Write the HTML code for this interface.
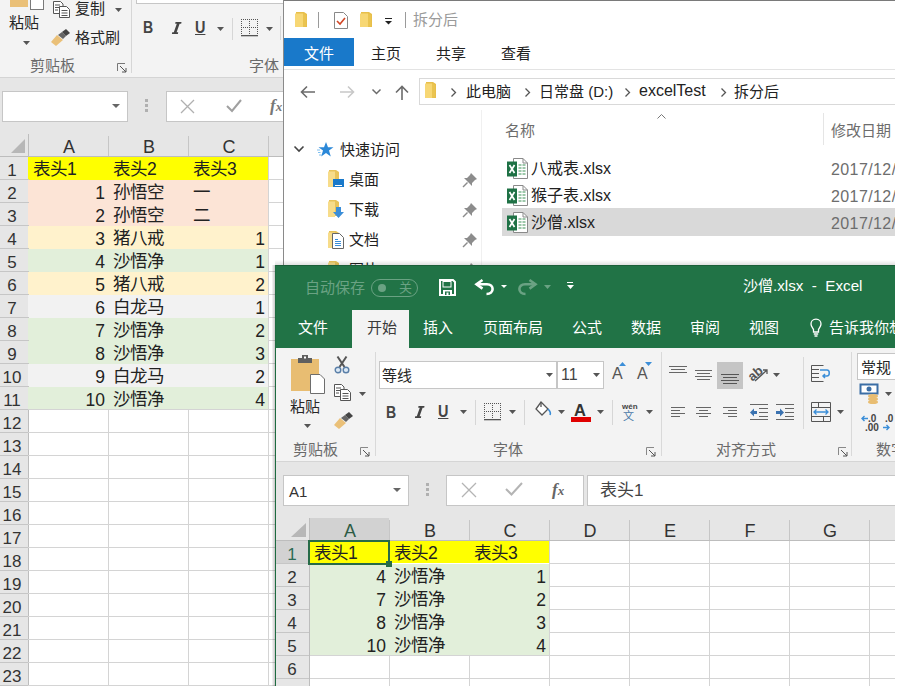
<!DOCTYPE html>
<html lang="zh-CN"><head><meta charset="utf-8">
<style>
*{box-sizing:border-box}
body{margin:0;width:897px;height:700px;position:relative;overflow:hidden;background:#fff;font-family:"Liberation Sans",sans-serif;color:#222}
.a{position:absolute}
.t{position:absolute;white-space:nowrap;line-height:1}
svg{position:absolute;overflow:visible}
.w{position:absolute;overflow:hidden}
</style></head><body>

<div class="w" style="left:0;top:0;width:284px;height:686px;background:#fff">
<div class="a" style="left:0px;top:0px;width:284px;height:77px;background:#f3f3f3;"></div>
<div class="a" style="left:0px;top:77px;width:284px;height:1px;background:#d4d4d4;"></div>
<div class="a" style="left:0px;top:78px;width:284px;height:56px;background:#e6e6e6;"></div>
<div class="a" style="left:10px;top:0px;width:18px;height:7px;background:#eac078;"></div>
<div class="a" style="left:30px;top:-1px;width:14px;height:11px;background:#fff;border:1px solid #7a7a7a"></div>
<div class="t" style="left:9px;top:15px;font-size:15px;color:#262626;font-weight:500">粘贴</div>
<svg style="left:22.5px;top:41px;" width="7" height="4" viewBox="0 0 7 4"><path d="M0 0H7L3.5 4Z" fill="#555"/></svg>
<svg style="left:53px;top:1px;" width="17" height="17" viewBox="0 0 17 17"><path d="M0.5 0.5h7l2.5 2.5v9.5h-9.5z" fill="#fff" stroke="#555"/><path d="M2 4h5M2 6.5h5M2 9h3" stroke="#555"/><path d="M6.5 5.5h7l3 3v8h-10z" fill="#fff" stroke="#555"/><path d="M8.5 9.5h6M8.5 12h6M8.5 14.5h6" stroke="#555"/></svg>
<div class="t" style="left:75px;top:1px;font-size:15px;color:#262626;font-weight:500">复制</div>
<svg style="left:114.5px;top:8px;" width="7" height="4" viewBox="0 0 7 4"><path d="M0 0H7L3.5 4Z" fill="#555"/></svg>
<svg style="left:50px;top:29px;" width="21" height="17" viewBox="0 0 21 17"><path d="M1 13L7 6L13 11L6 17Z" fill="#eac078"/><path d="M8 6L12 3L16 7L13 10Z" fill="#666"/><path d="M12 3L16 0L20 4L16 7Z" fill="#444"/></svg>
<div class="t" style="left:75px;top:30px;font-size:15px;color:#262626;font-weight:500">格式刷</div>
<div class="t" style="left:30px;top:58px;font-size:15px;color:#6a6a6a;">剪贴板</div>
<svg style="left:117px;top:63px;" width="10" height="10" viewBox="0 0 10 10"><path d="M0.5 8V0.5H8" fill="none" stroke="#777"/><path d="M3 3L9 9M9 5V9H5" fill="none" stroke="#555"/></svg>
<div class="a" style="left:131px;top:0px;width:1px;height:73px;background:#d6d6d6;"></div>
<div class="a" style="left:136px;top:-1px;width:160px;height:5px;background:#fff;border:1px solid #c6c6c6"></div>
<div class="t" style="left:143px;top:20px;font-size:16px;color:#444;font-weight:bold;transform:scaleX(0.88);transform-origin:0 0">B</div>
<svg style="left:170px;top:22px;" width="12" height="12" viewBox="0 0 12 12"><path d="M5.5 0H11.5L11.2 1.8H9.6L6.6 10.2H8.2L7.9 12H1.9L2.2 10.2H3.8L6.8 1.8H5.2Z" fill="#444"/></svg>
<div class="t" style="left:195px;top:20px;font-size:16px;color:#444;text-decoration:underline;font-weight:bold;transform:scaleX(0.9);transform-origin:0 0">U</div>
<svg style="left:216.5px;top:27px;" width="7" height="4" viewBox="0 0 7 4"><path d="M0 0H7L3.5 4Z" fill="#555"/></svg>
<div class="a" style="left:232px;top:18px;width:1px;height:22px;background:#d6d6d6;"></div>
<svg style="left:241px;top:19px;" width="17" height="18" viewBox="0 0 17 18"><g fill="#555"><rect x="0" y="0" width="1" height="1"/><rect x="0" y="2" width="1" height="1"/><rect x="0" y="4" width="1" height="1"/><rect x="0" y="6" width="1" height="1"/><rect x="0" y="8" width="1" height="1"/><rect x="0" y="10" width="1" height="1"/><rect x="0" y="12" width="1" height="1"/><rect x="0" y="14" width="1" height="1"/><rect x="2" y="0" width="1" height="1"/><rect x="2" y="8" width="1" height="1"/><rect x="4" y="0" width="1" height="1"/><rect x="4" y="8" width="1" height="1"/><rect x="6" y="0" width="1" height="1"/><rect x="6" y="8" width="1" height="1"/><rect x="8" y="0" width="1" height="1"/><rect x="8" y="2" width="1" height="1"/><rect x="8" y="4" width="1" height="1"/><rect x="8" y="6" width="1" height="1"/><rect x="8" y="8" width="1" height="1"/><rect x="8" y="10" width="1" height="1"/><rect x="8" y="12" width="1" height="1"/><rect x="8" y="14" width="1" height="1"/><rect x="10" y="0" width="1" height="1"/><rect x="10" y="8" width="1" height="1"/><rect x="12" y="0" width="1" height="1"/><rect x="12" y="8" width="1" height="1"/><rect x="14" y="0" width="1" height="1"/><rect x="14" y="8" width="1" height="1"/><rect x="16" y="0" width="1" height="1"/><rect x="16" y="2" width="1" height="1"/><rect x="16" y="4" width="1" height="1"/><rect x="16" y="6" width="1" height="1"/><rect x="16" y="8" width="1" height="1"/><rect x="16" y="10" width="1" height="1"/><rect x="16" y="12" width="1" height="1"/><rect x="16" y="14" width="1" height="1"/><rect x="0" y="16" width="17" height="1.3"/></g></svg>
<svg style="left:265.5px;top:27px;" width="7" height="4" viewBox="0 0 7 4"><path d="M0 0H7L3.5 4Z" fill="#555"/></svg>
<div class="a" style="left:280px;top:16px;width:1px;height:24px;background:#d6d6d6;"></div>
<div class="t" style="left:249px;top:58px;font-size:15px;color:#6a6a6a;">字体</div>
<div class="a" style="left:2px;top:91px;width:126px;height:31px;background:#fff;border:1px solid #c6c6c6"></div>
<svg style="left:112.0px;top:104px;" width="8" height="4" viewBox="0 0 8 4"><path d="M0 0H8L4.0 4Z" fill="#666"/></svg>
<div class="a" style="left:145px;top:99px;width:3px;height:3px;background:#b0b0b0;"></div>
<div class="a" style="left:145px;top:104px;width:3px;height:3px;background:#b0b0b0;"></div>
<div class="a" style="left:145px;top:109px;width:3px;height:3px;background:#b0b0b0;"></div>
<div class="a" style="left:166px;top:91px;width:140px;height:31px;background:#fff;border:1px solid #c6c6c6"></div>
<svg style="left:181px;top:100px;" width="13" height="13" viewBox="0 0 13 13"><path d="M0 0L13 13M13 0L0 13" stroke="#b0b0b0" stroke-width="1.3"/></svg>
<svg style="left:226px;top:99px;" width="16" height="13" viewBox="0 0 16 13"><path d="M1 7L6 12L15 1" fill="none" stroke="#a0a0a0" stroke-width="2"/></svg>
<div class="t" style="left:270px;top:97px;font-size:17px;color:#777;font-family:'Liberation Serif',serif;font-style:italic;font-weight:bold">f<span style="font-size:13px">x</span></div>
<div class="a" style="left:0px;top:134px;width:284px;height:23px;background:#e6e6e6;"></div>
<div class="a" style="left:0px;top:157px;width:29px;height:529px;background:#e6e6e6;"></div>
<div class="a" style="left:0px;top:156px;width:284px;height:1px;background:#bdbdbd;"></div>
<div class="a" style="left:28px;top:134px;width:1px;height:552px;background:#bdbdbd;"></div>
<svg style="left:11px;top:139px;" width="14" height="14" viewBox="0 0 14 14"><path d="M14 0V14H0Z" fill="#b7b7b7"/></svg>
<div class="a" style="left:108px;top:136px;width:1px;height:20px;background:#c6c6c6;"></div>
<div class="a" style="left:188px;top:136px;width:1px;height:20px;background:#c6c6c6;"></div>
<div class="a" style="left:268px;top:136px;width:1px;height:20px;background:#c6c6c6;"></div>
<div class="t" style="left:-31px;width:200px;text-align:center;top:137.5px;font-size:18px;color:#333;">A</div>
<div class="t" style="left:49px;width:200px;text-align:center;top:137.5px;font-size:18px;color:#333;">B</div>
<div class="t" style="left:129px;width:200px;text-align:center;top:137.5px;font-size:18px;color:#333;">C</div>
<div class="a" style="left:28px;top:157px;width:240px;height:23px;background:#ffff00;"></div>
<div class="a" style="left:28px;top:180px;width:240px;height:23px;background:#fce4d6;"></div>
<div class="a" style="left:28px;top:203px;width:240px;height:23px;background:#fce4d6;"></div>
<div class="a" style="left:28px;top:226px;width:240px;height:23px;background:#fff2cc;"></div>
<div class="a" style="left:28px;top:249px;width:240px;height:23px;background:#e2efda;"></div>
<div class="a" style="left:28px;top:272px;width:240px;height:23px;background:#fff2cc;"></div>
<div class="a" style="left:28px;top:295px;width:240px;height:23px;background:#f2f2f2;"></div>
<div class="a" style="left:28px;top:318px;width:240px;height:23px;background:#e2efda;"></div>
<div class="a" style="left:28px;top:341px;width:240px;height:23px;background:#e2efda;"></div>
<div class="a" style="left:28px;top:364px;width:240px;height:23px;background:#f2f2f2;"></div>
<div class="a" style="left:28px;top:387px;width:240px;height:23px;background:#e2efda;"></div>
<div class="a" style="left:0px;top:179px;width:29px;height:1px;background:#c6c6c6;"></div>
<div class="a" style="left:268px;top:179px;width:16px;height:1px;background:#d4d4d4;"></div>
<div class="a" style="left:0px;top:202px;width:29px;height:1px;background:#c6c6c6;"></div>
<div class="a" style="left:268px;top:202px;width:16px;height:1px;background:#d4d4d4;"></div>
<div class="a" style="left:0px;top:225px;width:29px;height:1px;background:#c6c6c6;"></div>
<div class="a" style="left:268px;top:225px;width:16px;height:1px;background:#d4d4d4;"></div>
<div class="a" style="left:0px;top:248px;width:29px;height:1px;background:#c6c6c6;"></div>
<div class="a" style="left:268px;top:248px;width:16px;height:1px;background:#d4d4d4;"></div>
<div class="a" style="left:0px;top:271px;width:29px;height:1px;background:#c6c6c6;"></div>
<div class="a" style="left:268px;top:271px;width:16px;height:1px;background:#d4d4d4;"></div>
<div class="a" style="left:0px;top:294px;width:29px;height:1px;background:#c6c6c6;"></div>
<div class="a" style="left:268px;top:294px;width:16px;height:1px;background:#d4d4d4;"></div>
<div class="a" style="left:0px;top:317px;width:29px;height:1px;background:#c6c6c6;"></div>
<div class="a" style="left:268px;top:317px;width:16px;height:1px;background:#d4d4d4;"></div>
<div class="a" style="left:0px;top:340px;width:29px;height:1px;background:#c6c6c6;"></div>
<div class="a" style="left:268px;top:340px;width:16px;height:1px;background:#d4d4d4;"></div>
<div class="a" style="left:0px;top:363px;width:29px;height:1px;background:#c6c6c6;"></div>
<div class="a" style="left:268px;top:363px;width:16px;height:1px;background:#d4d4d4;"></div>
<div class="a" style="left:0px;top:386px;width:29px;height:1px;background:#c6c6c6;"></div>
<div class="a" style="left:268px;top:386px;width:16px;height:1px;background:#d4d4d4;"></div>
<div class="a" style="left:0px;top:409px;width:29px;height:1px;background:#c6c6c6;"></div>
<div class="a" style="left:28px;top:409px;width:256px;height:1px;background:#d4d4d4;"></div>
<div class="a" style="left:0px;top:432px;width:29px;height:1px;background:#c6c6c6;"></div>
<div class="a" style="left:28px;top:432px;width:256px;height:1px;background:#d4d4d4;"></div>
<div class="a" style="left:0px;top:455px;width:29px;height:1px;background:#c6c6c6;"></div>
<div class="a" style="left:28px;top:455px;width:256px;height:1px;background:#d4d4d4;"></div>
<div class="a" style="left:0px;top:478px;width:29px;height:1px;background:#c6c6c6;"></div>
<div class="a" style="left:28px;top:478px;width:256px;height:1px;background:#d4d4d4;"></div>
<div class="a" style="left:0px;top:501px;width:29px;height:1px;background:#c6c6c6;"></div>
<div class="a" style="left:28px;top:501px;width:256px;height:1px;background:#d4d4d4;"></div>
<div class="a" style="left:0px;top:524px;width:29px;height:1px;background:#c6c6c6;"></div>
<div class="a" style="left:28px;top:524px;width:256px;height:1px;background:#d4d4d4;"></div>
<div class="a" style="left:0px;top:547px;width:29px;height:1px;background:#c6c6c6;"></div>
<div class="a" style="left:28px;top:547px;width:256px;height:1px;background:#d4d4d4;"></div>
<div class="a" style="left:0px;top:570px;width:29px;height:1px;background:#c6c6c6;"></div>
<div class="a" style="left:28px;top:570px;width:256px;height:1px;background:#d4d4d4;"></div>
<div class="a" style="left:0px;top:593px;width:29px;height:1px;background:#c6c6c6;"></div>
<div class="a" style="left:28px;top:593px;width:256px;height:1px;background:#d4d4d4;"></div>
<div class="a" style="left:0px;top:616px;width:29px;height:1px;background:#c6c6c6;"></div>
<div class="a" style="left:28px;top:616px;width:256px;height:1px;background:#d4d4d4;"></div>
<div class="a" style="left:0px;top:639px;width:29px;height:1px;background:#c6c6c6;"></div>
<div class="a" style="left:28px;top:639px;width:256px;height:1px;background:#d4d4d4;"></div>
<div class="a" style="left:0px;top:662px;width:29px;height:1px;background:#c6c6c6;"></div>
<div class="a" style="left:28px;top:662px;width:256px;height:1px;background:#d4d4d4;"></div>
<div class="a" style="left:0px;top:685px;width:29px;height:1px;background:#c6c6c6;"></div>
<div class="a" style="left:28px;top:685px;width:256px;height:1px;background:#d4d4d4;"></div>
<div class="a" style="left:108px;top:409px;width:1px;height:277px;background:#d4d4d4;"></div>
<div class="a" style="left:188px;top:409px;width:1px;height:277px;background:#d4d4d4;"></div>
<div class="a" style="left:268px;top:409px;width:1px;height:277px;background:#d4d4d4;"></div>
<div class="a" style="left:268px;top:157px;width:1px;height:529px;background:#d4d4d4;"></div>
<div class="t" style="left:-88px;width:200px;text-align:center;top:162px;font-size:17px;color:#333;">1</div>
<div class="t" style="left:-88px;width:200px;text-align:center;top:185px;font-size:17px;color:#333;">2</div>
<div class="t" style="left:-88px;width:200px;text-align:center;top:208px;font-size:17px;color:#333;">3</div>
<div class="t" style="left:-88px;width:200px;text-align:center;top:231px;font-size:17px;color:#333;">4</div>
<div class="t" style="left:-88px;width:200px;text-align:center;top:254px;font-size:17px;color:#333;">5</div>
<div class="t" style="left:-88px;width:200px;text-align:center;top:277px;font-size:17px;color:#333;">6</div>
<div class="t" style="left:-88px;width:200px;text-align:center;top:300px;font-size:17px;color:#333;">7</div>
<div class="t" style="left:-88px;width:200px;text-align:center;top:323px;font-size:17px;color:#333;">8</div>
<div class="t" style="left:-88px;width:200px;text-align:center;top:346px;font-size:17px;color:#333;">9</div>
<div class="t" style="left:-88px;width:200px;text-align:center;top:369px;font-size:17px;color:#333;">10</div>
<div class="t" style="left:-88px;width:200px;text-align:center;top:392px;font-size:17px;color:#333;">11</div>
<div class="t" style="left:-88px;width:200px;text-align:center;top:415px;font-size:17px;color:#333;">12</div>
<div class="t" style="left:-88px;width:200px;text-align:center;top:438px;font-size:17px;color:#333;">13</div>
<div class="t" style="left:-88px;width:200px;text-align:center;top:461px;font-size:17px;color:#333;">14</div>
<div class="t" style="left:-88px;width:200px;text-align:center;top:484px;font-size:17px;color:#333;">15</div>
<div class="t" style="left:-88px;width:200px;text-align:center;top:507px;font-size:17px;color:#333;">16</div>
<div class="t" style="left:-88px;width:200px;text-align:center;top:530px;font-size:17px;color:#333;">17</div>
<div class="t" style="left:-88px;width:200px;text-align:center;top:553px;font-size:17px;color:#333;">18</div>
<div class="t" style="left:-88px;width:200px;text-align:center;top:576px;font-size:17px;color:#333;">19</div>
<div class="t" style="left:-88px;width:200px;text-align:center;top:599px;font-size:17px;color:#333;">20</div>
<div class="t" style="left:-88px;width:200px;text-align:center;top:622px;font-size:17px;color:#333;">21</div>
<div class="t" style="left:-88px;width:200px;text-align:center;top:645px;font-size:17px;color:#333;">22</div>
<div class="t" style="left:-88px;width:200px;text-align:center;top:668px;font-size:17px;color:#333;">23</div>
<div class="t" style="left:33px;top:161px;font-size:17.5px;color:#222;">表头1</div>
<div class="t" style="left:113px;top:161px;font-size:17.5px;color:#222;">表头2</div>
<div class="t" style="left:193px;top:161px;font-size:17.5px;color:#222;">表头3</div>
<div class="t" style="right:calc(100% - 105px);top:185px;font-size:17.5px;color:#222;">1</div>
<div class="t" style="left:113px;top:184px;font-size:17.5px;color:#222;">孙悟空</div>
<div class="t" style="left:193px;top:184px;font-size:17.5px;color:#222;">一</div>
<div class="t" style="right:calc(100% - 105px);top:208px;font-size:17.5px;color:#222;">2</div>
<div class="t" style="left:113px;top:207px;font-size:17.5px;color:#222;">孙悟空</div>
<div class="t" style="left:193px;top:207px;font-size:17.5px;color:#222;">二</div>
<div class="t" style="right:calc(100% - 105px);top:231px;font-size:17.5px;color:#222;">3</div>
<div class="t" style="left:113px;top:230px;font-size:17.5px;color:#222;">猪八戒</div>
<div class="t" style="right:calc(100% - 265px);top:231px;font-size:17.5px;color:#222;">1</div>
<div class="t" style="right:calc(100% - 105px);top:254px;font-size:17.5px;color:#222;">4</div>
<div class="t" style="left:113px;top:253px;font-size:17.5px;color:#222;">沙悟净</div>
<div class="t" style="right:calc(100% - 265px);top:254px;font-size:17.5px;color:#222;">1</div>
<div class="t" style="right:calc(100% - 105px);top:277px;font-size:17.5px;color:#222;">5</div>
<div class="t" style="left:113px;top:276px;font-size:17.5px;color:#222;">猪八戒</div>
<div class="t" style="right:calc(100% - 265px);top:277px;font-size:17.5px;color:#222;">2</div>
<div class="t" style="right:calc(100% - 105px);top:300px;font-size:17.5px;color:#222;">6</div>
<div class="t" style="left:113px;top:299px;font-size:17.5px;color:#222;">白龙马</div>
<div class="t" style="right:calc(100% - 265px);top:300px;font-size:17.5px;color:#222;">1</div>
<div class="t" style="right:calc(100% - 105px);top:323px;font-size:17.5px;color:#222;">7</div>
<div class="t" style="left:113px;top:322px;font-size:17.5px;color:#222;">沙悟净</div>
<div class="t" style="right:calc(100% - 265px);top:323px;font-size:17.5px;color:#222;">2</div>
<div class="t" style="right:calc(100% - 105px);top:346px;font-size:17.5px;color:#222;">8</div>
<div class="t" style="left:113px;top:345px;font-size:17.5px;color:#222;">沙悟净</div>
<div class="t" style="right:calc(100% - 265px);top:346px;font-size:17.5px;color:#222;">3</div>
<div class="t" style="right:calc(100% - 105px);top:369px;font-size:17.5px;color:#222;">9</div>
<div class="t" style="left:113px;top:368px;font-size:17.5px;color:#222;">白龙马</div>
<div class="t" style="right:calc(100% - 265px);top:369px;font-size:17.5px;color:#222;">2</div>
<div class="t" style="right:calc(100% - 105px);top:392px;font-size:17.5px;color:#222;">10</div>
<div class="t" style="left:113px;top:391px;font-size:17.5px;color:#222;">沙悟净</div>
<div class="t" style="right:calc(100% - 265px);top:392px;font-size:17.5px;color:#222;">4</div>
</div>
<div class="a" style="left:272px;top:265px;width:3px;height:421px;background:linear-gradient(90deg, rgba(0,0,0,0.03), rgba(0,0,0,0.22));"></div>
<div class="w" style="left:283px;top:0;width:612px;height:265px;background:#fff">
<div class="a" style="left:0px;top:0px;width:612px;height:1px;background:#7a7a7a;"></div>
<div class="a" style="left:0px;top:0px;width:1px;height:265px;background:#8a8a8a;"></div>
<svg style="left:12px;top:12px;" width="12" height="15" viewBox="0 0 12 15"><path d="M1 0H9L12 2V15H1Z" fill="#e8bf4a"/><path d="M0 1.5H8V15H0Z" fill="#f7d774"/><path d="M8 1.5L11 3V14L8 15Z" fill="#eac450"/></svg>
<div class="a" style="left:35px;top:12px;width:1px;height:16px;background:#9a9a9a;"></div>
<svg style="left:51px;top:12px;" width="14" height="17" viewBox="0 0 14 17"><path d="M0.5 0.5h9l4 4v12h-13z" fill="#fff" stroke="#888"/><path d="M3 9l3 3 5-6" fill="none" stroke="#d24726" stroke-width="1.6"/></svg>
<svg style="left:77px;top:12px;" width="12" height="15" viewBox="0 0 12 15"><path d="M1 0H9L12 2V15H1Z" fill="#e8bf4a"/><path d="M0 1.5H8V15H0Z" fill="#f7d774"/><path d="M8 1.5L11 3V14L8 15Z" fill="#eac450"/></svg>
<svg style="left:102px;top:18px;" width="7" height="7" viewBox="0 0 7 7"><path d="M0 0.5H7" stroke="#222"/><path d="M0 3H7L3.5 6.5Z" fill="#222"/></svg>
<div class="a" style="left:122px;top:12px;width:1px;height:16px;background:#9a9a9a;"></div>
<div class="t" style="left:130px;top:12px;font-size:15px;color:#9a9a9a;">拆分后</div>
<div class="a" style="left:1px;top:38px;width:70px;height:28px;background:#1979ca;"></div>
<div class="t" style="left:21px;top:46px;font-size:15px;color:#fff;">文件</div>
<div class="t" style="left:88px;top:46px;font-size:15px;color:#222;">主页</div>
<div class="t" style="left:153px;top:46px;font-size:15px;color:#222;">共享</div>
<div class="t" style="left:218px;top:46px;font-size:15px;color:#222;">查看</div>
<div class="a" style="left:1px;top:69px;width:611px;height:1px;background:#e3e3e3;"></div>
<svg style="left:17px;top:85px;" width="16" height="14" viewBox="0 0 16 14"><path d="M15 7H2M7 1.5L1.5 7L7 12.5" fill="none" stroke="#6b6b6b" stroke-width="1.6"/></svg>
<svg style="left:56px;top:85px;" width="16" height="14" viewBox="0 0 16 14"><path d="M1 7H14M9 1.5L14.5 7L9 12.5" fill="none" stroke="#c8c8c8" stroke-width="1.6"/></svg>
<svg style="left:89px;top:89px;" width="9" height="6" viewBox="0 0 9 6"><path d="M0.5 0.5L4.5 4.5L8.5 0.5" fill="none" stroke="#6b6b6b" stroke-width="1.5"/></svg>
<svg style="left:112px;top:85px;" width="14" height="15" viewBox="0 0 14 15"><path d="M7 15V1.5M1 7.5L7 1.5L13 7.5" fill="none" stroke="#6b6b6b" stroke-width="1.6"/></svg>
<div class="a" style="left:136px;top:78px;width:480px;height:27px;background:#fff;border:1px solid #d9d9d9"></div>
<svg style="left:142px;top:82px;" width="11" height="16" viewBox="0 0 11 16"><path d="M1 0H8L11 2V16H1Z" fill="#e8bf4a"/><path d="M0 1.5H7V16H0Z" fill="#f7d774"/><path d="M7 1.5L10 3V15L7 16Z" fill="#eac450"/></svg>
<svg style="left:168px;top:88px;" width="5" height="9" viewBox="0 0 5 9"><path d="M0.5 0.5L4.5 4.5L0.5 8.5" fill="none" stroke="#555" stroke-width="1.3"/></svg>
<div class="t" style="left:183px;top:84px;font-size:15px;color:#222;">此电脑</div>
<svg style="left:242px;top:88px;" width="5" height="9" viewBox="0 0 5 9"><path d="M0.5 0.5L4.5 4.5L0.5 8.5" fill="none" stroke="#555" stroke-width="1.3"/></svg>
<div class="t" style="left:256px;top:84px;font-size:15px;color:#222;">日常盘 (D:)</div>
<svg style="left:342px;top:88px;" width="5" height="9" viewBox="0 0 5 9"><path d="M0.5 0.5L4.5 4.5L0.5 8.5" fill="none" stroke="#555" stroke-width="1.3"/></svg>
<div class="t" style="left:356px;top:83px;font-size:16px;color:#222;">excelTest</div>
<svg style="left:438px;top:88px;" width="5" height="9" viewBox="0 0 5 9"><path d="M0.5 0.5L4.5 4.5L0.5 8.5" fill="none" stroke="#555" stroke-width="1.3"/></svg>
<div class="t" style="left:451px;top:84px;font-size:15px;color:#222;">拆分后</div>
<svg style="left:374px;top:114px;" width="9" height="5" viewBox="0 0 9 5"><path d="M0.5 4.5L4.5 0.5L8.5 4.5" fill="none" stroke="#777" stroke-width="1"/></svg>
<svg style="left:11px;top:146px;" width="10" height="6" viewBox="0 0 10 6"><path d="M0.5 0.5L5 5L9.5 0.5" fill="none" stroke="#444" stroke-width="1.6"/></svg>
<svg style="left:34px;top:142px;" width="16" height="15" viewBox="0 0 16 15"><path d="M9 0L11 5.2H16.5L12 8.6L13.8 14.5L9 11L4.2 14.5L6 8.6L1.5 5.2H7Z" fill="#2b88d8"/><path d="M0 8H3M1 10.5H3.5M2 13H4.5" stroke="#7fbfef" stroke-width="1"/></svg>
<div class="t" style="left:57px;top:142px;font-size:15px;color:#222;">快速访问</div>
<svg style="left:45px;top:170px;" width="12" height="17" viewBox="0 0 12 17"><path d="M1 0H8L11 2V16H1Z" fill="#e8c35a"/><path d="M0 1.5H7V17H0Z" fill="#f7dc8a"/></svg>
<div class="a" style="left:50px;top:179px;width:11px;height:8px;background:#1979ca;"></div>
<div class="a" style="left:52px;top:185px;width:7px;height:1px;background:#fff;"></div>
<div class="t" style="left:66px;top:172px;font-size:15px;color:#222;">桌面</div>
<svg style="left:45px;top:200px;" width="12" height="17" viewBox="0 0 12 17"><path d="M1 0H8L11 2V16H1Z" fill="#e8c35a"/><path d="M0 1.5H7V17H0Z" fill="#f7dc8a"/></svg>
<svg style="left:50px;top:207px;" width="11" height="11" viewBox="0 0 11 11"><path d="M3 0h5v5h3L5.5 11L0 5h3z" fill="#3b8ed8"/></svg>
<div class="t" style="left:66px;top:202px;font-size:15px;color:#222;">下载</div>
<svg style="left:45px;top:231px;" width="12" height="17" viewBox="0 0 12 17"><path d="M1 0H8L11 2V16H1Z" fill="#e8c35a"/><path d="M0 1.5H7V17H0Z" fill="#f7dc8a"/></svg>
<svg style="left:49px;top:233px;" width="12" height="16" viewBox="0 0 12 16"><path d="M0.5 0.5h7l4 4v11h-11z" fill="#fff" stroke="#666"/><path d="M3 6.5h3M3 8.5h6M3 10.5h6M3 12.5h6" stroke="#3b8ed8"/></svg>
<div class="t" style="left:66px;top:232px;font-size:15px;color:#222;">文档</div>
<svg style="left:45px;top:261px;" width="12" height="17" viewBox="0 0 12 17"><path d="M1 0H8L11 2V16H1Z" fill="#e8c35a"/><path d="M0 1.5H7V17H0Z" fill="#f7dc8a"/></svg>
<div class="t" style="left:66px;top:262px;font-size:15px;color:#222;">图片</div>
<svg style="left:180px;top:173px;" width="14" height="14" viewBox="0 0 14 14"><path d="M8 0L14 6L12 7L9 10L9 13L1 5L4 5L7 2Z" fill="#8c8c8c"/><path d="M4.5 9.5L0 14" stroke="#8c8c8c" stroke-width="1.4"/></svg>
<svg style="left:180px;top:203px;" width="14" height="14" viewBox="0 0 14 14"><path d="M8 0L14 6L12 7L9 10L9 13L1 5L4 5L7 2Z" fill="#8c8c8c"/><path d="M4.5 9.5L0 14" stroke="#8c8c8c" stroke-width="1.4"/></svg>
<svg style="left:180px;top:233px;" width="14" height="14" viewBox="0 0 14 14"><path d="M8 0L14 6L12 7L9 10L9 13L1 5L4 5L7 2Z" fill="#8c8c8c"/><path d="M4.5 9.5L0 14" stroke="#8c8c8c" stroke-width="1.4"/></svg>
<svg style="left:180px;top:263px;" width="14" height="14" viewBox="0 0 14 14"><path d="M8 0L14 6L12 7L9 10L9 13L1 5L4 5L7 2Z" fill="#8c8c8c"/><path d="M4.5 9.5L0 14" stroke="#8c8c8c" stroke-width="1.4"/></svg>
<div class="a" style="left:198px;top:110px;width:1px;height:155px;background:#f0f0f0;"></div>
<div class="t" style="left:222px;top:123px;font-size:15px;color:#6d6d6d;">名称</div>
<div class="a" style="left:540px;top:113px;width:1px;height:32px;background:#e5e5e5;"></div>
<div class="t" style="left:548px;top:123px;font-size:15px;color:#6d6d6d;">修改日期</div>
<div class="a" style="left:219px;top:208px;width:393px;height:28px;background:#d9d9d9;"></div>
<svg style="left:224px;top:160px;" width="22" height="20" viewBox="0 0 22 20"><path d="M6.5 -1.5H16L20.5 3V18.5H6.5Z" fill="#fff" stroke="#8a8a8a"/><path d="M16 -1.5V3H20.5" fill="none" stroke="#8a8a8a"/><rect x="11.5" y="4" width="3" height="2" fill="#9cc8aa"/><rect x="11.5" y="7" width="3" height="2" fill="#9cc8aa"/><rect x="11.5" y="10" width="3" height="2" fill="#9cc8aa"/><rect x="11.5" y="13" width="3" height="2" fill="#9cc8aa"/><rect x="15.5" y="4" width="3" height="2" fill="#9cc8aa"/><rect x="15.5" y="7" width="3" height="2" fill="#9cc8aa"/><rect x="15.5" y="10" width="3" height="2" fill="#9cc8aa"/><rect x="15.5" y="13" width="3" height="2" fill="#9cc8aa"/><path d="M0 1.5H10V16.5H0Z" fill="#1e7145"/><path d="M2.5 5L7.5 13M7.5 5L2.5 13" stroke="#fff" stroke-width="1.7"/></svg>
<div class="t" style="left:248px;top:161px;font-size:16px;color:#222;">八戒表.xlsx</div>
<div class="t" style="left:548px;top:162px;font-size:16px;color:#6d6d6d;letter-spacing:0.4px">2017/12/</div>
<svg style="left:224px;top:187px;" width="22" height="20" viewBox="0 0 22 20"><path d="M6.5 -1.5H16L20.5 3V18.5H6.5Z" fill="#fff" stroke="#8a8a8a"/><path d="M16 -1.5V3H20.5" fill="none" stroke="#8a8a8a"/><rect x="11.5" y="4" width="3" height="2" fill="#9cc8aa"/><rect x="11.5" y="7" width="3" height="2" fill="#9cc8aa"/><rect x="11.5" y="10" width="3" height="2" fill="#9cc8aa"/><rect x="11.5" y="13" width="3" height="2" fill="#9cc8aa"/><rect x="15.5" y="4" width="3" height="2" fill="#9cc8aa"/><rect x="15.5" y="7" width="3" height="2" fill="#9cc8aa"/><rect x="15.5" y="10" width="3" height="2" fill="#9cc8aa"/><rect x="15.5" y="13" width="3" height="2" fill="#9cc8aa"/><path d="M0 1.5H10V16.5H0Z" fill="#1e7145"/><path d="M2.5 5L7.5 13M7.5 5L2.5 13" stroke="#fff" stroke-width="1.7"/></svg>
<div class="t" style="left:248px;top:188px;font-size:16px;color:#222;">猴子表.xlsx</div>
<div class="t" style="left:548px;top:189px;font-size:16px;color:#6d6d6d;letter-spacing:0.4px">2017/12/</div>
<svg style="left:224px;top:214px;" width="22" height="20" viewBox="0 0 22 20"><path d="M6.5 -1.5H16L20.5 3V18.5H6.5Z" fill="#fff" stroke="#8a8a8a"/><path d="M16 -1.5V3H20.5" fill="none" stroke="#8a8a8a"/><rect x="11.5" y="4" width="3" height="2" fill="#9cc8aa"/><rect x="11.5" y="7" width="3" height="2" fill="#9cc8aa"/><rect x="11.5" y="10" width="3" height="2" fill="#9cc8aa"/><rect x="11.5" y="13" width="3" height="2" fill="#9cc8aa"/><rect x="15.5" y="4" width="3" height="2" fill="#9cc8aa"/><rect x="15.5" y="7" width="3" height="2" fill="#9cc8aa"/><rect x="15.5" y="10" width="3" height="2" fill="#9cc8aa"/><rect x="15.5" y="13" width="3" height="2" fill="#9cc8aa"/><path d="M0 1.5H10V16.5H0Z" fill="#1e7145"/><path d="M2.5 5L7.5 13M7.5 5L2.5 13" stroke="#fff" stroke-width="1.7"/></svg>
<div class="t" style="left:248px;top:215px;font-size:16px;color:#222;">沙僧.xlsx</div>
<div class="t" style="left:548px;top:216px;font-size:16px;color:#6d6d6d;letter-spacing:0.4px">2017/12/</div>
</div>
<div class="a" style="left:275px;top:260px;width:620px;height:5px;background:linear-gradient(180deg, rgba(0,0,0,0), rgba(0,0,0,0.12));"></div>
<div class="w" style="left:275px;top:265px;width:620px;height:421px;background:#fff">
<div class="a" style="left:0px;top:0px;width:620px;height:83px;background:#217346;"></div>
<div class="a" style="left:0px;top:0px;width:620px;height:1px;background:#1b5e39;"></div>
<div class="t" style="left:30px;top:15px;font-size:15px;color:#6aa283;">自动保存</div>
<div class="a" style="left:96px;top:14px;width:47px;height:18px;background:transparent;border:1.5px solid #6aa283;border-radius:9px"></div>
<svg style="left:102px;top:18px;" width="10" height="10" viewBox="0 0 10 10"><circle cx="5" cy="5" r="4" fill="#6aa283"/></svg>
<div class="t" style="left:124px;top:16px;font-size:13px;color:#6aa283;">关</div>
<svg style="left:164px;top:14px;" width="17" height="17" viewBox="0 0 17 17"><path d="M1 1H14L16 3V16H1Z" fill="none" stroke="#fff" stroke-width="2"/><path d="M3.5 2H12.5V8.5H3.5Z" fill="#fff"/><path d="M4.5 3H11.5V7.5H4.5Z" fill="#217346"/><path d="M4 11H13V16H4Z" fill="#fff"/><path d="M6 12.5H11V16H6Z" fill="#217346"/><path d="M7.5 13.5H9.5V16H7.5Z" fill="#fff"/></svg>
<svg style="left:199px;top:13px;" width="21" height="18" viewBox="0 0 21 18"><path d="M8.5 2L2.5 6.3L8.5 10.6" fill="none" stroke="#fff" stroke-width="2.6" stroke-linejoin="miter"/><path d="M2.5 6.3H13C16.8 6.3 18.6 8.6 18.6 11.1C18.6 13.8 16.5 16 12.5 16" fill="none" stroke="#fff" stroke-width="2.6"/></svg>
<svg style="left:226.0px;top:20px;" width="6" height="3" viewBox="0 0 6 3"><path d="M0 0H6L3.0 3Z" fill="#fff"/></svg>
<svg style="left:243px;top:13px;" width="21" height="18" viewBox="0 0 21 18"><path d="M11.5 2L17.5 6.3L11.5 10.6" fill="none" stroke="#6aa283" stroke-width="2.6"/><path d="M17.5 6.3H7C3.2 6.3 1.4 8.6 1.4 11.1C1.4 13.8 3.5 16 7.5 16" fill="none" stroke="#6aa283" stroke-width="2.6"/></svg>
<svg style="left:268.5px;top:20px;" width="7" height="4" viewBox="0 0 7 4"><path d="M0 0H7L3.5 4Z" fill="#6aa283"/></svg>
<div class="a" style="left:292px;top:17px;width:6px;height:1px;background:#fff;"></div>
<svg style="left:291.5px;top:20px;" width="7" height="4" viewBox="0 0 7 4"><path d="M0 0H7L3.5 4Z" fill="#fff"/></svg>
<div class="t" style="left:468px;top:13px;font-size:15.2px;color:#fff;">沙僧.xlsx&nbsp; -&nbsp; Excel</div>
<div class="a" style="left:77px;top:45px;width:57px;height:38px;background:#f3f3f3;"></div>
<div class="t" style="left:23px;top:55px;font-size:15px;color:#fff;">文件</div>
<div class="t" style="left:92px;top:55px;font-size:15px;color:#3a3a3a;">开始</div>
<div class="t" style="left:148px;top:55px;font-size:15px;color:#fff;">插入</div>
<div class="t" style="left:208px;top:55px;font-size:15px;color:#fff;">页面布局</div>
<div class="t" style="left:297px;top:55px;font-size:15px;color:#fff;">公式</div>
<div class="t" style="left:356px;top:55px;font-size:15px;color:#fff;">数据</div>
<div class="t" style="left:415px;top:55px;font-size:15px;color:#fff;">审阅</div>
<div class="t" style="left:474px;top:55px;font-size:15px;color:#fff;">视图</div>
<svg style="left:535px;top:53px;" width="12" height="19" viewBox="0 0 12 19"><path d="M6 1.2C2.8 1.2 1 3.6 1 6C1 8.5 2.8 9.8 3.5 11.5V14H8.5V11.5C9.2 9.8 11 8.5 11 6C11 3.6 9.2 1.2 6 1.2Z" fill="none" stroke="#fff" stroke-width="1.3"/><path d="M3.8 16H8.2M4.5 18H7.5" stroke="#fff" stroke-width="1.3"/></svg>
<div class="t" style="left:554px;top:55px;font-size:15px;color:#fff;">告诉我你想要做什么</div>
<div class="a" style="left:0px;top:83px;width:620px;height:113px;background:#f3f3f3;"></div>
<div class="a" style="left:0px;top:196px;width:620px;height:1px;background:#d5d5d5;"></div>
<svg style="left:15px;top:90px;" width="36" height="40" viewBox="0 0 36 40"><path d="M1 4H29V36H1Z" fill="#e8bd72"/><path d="M8 3H22V8H8Z" fill="#5f5f5f"/><path d="M12 0H18V4H12Z" fill="#5f5f5f"/><path d="M14 1.5H16V3.5H14Z" fill="#fff"/><path d="M20.5 19.5H30L34.5 24V38.5H20.5Z" fill="#fff" stroke="#6d6d6d"/></svg>
<div class="t" style="left:15px;top:134px;font-size:15px;color:#262626;font-weight:500">粘贴</div>
<svg style="left:28.5px;top:159px;" width="7" height="4" viewBox="0 0 7 4"><path d="M0 0H7L3.5 4Z" fill="#555"/></svg>
<svg style="left:59px;top:91px;" width="16" height="18" viewBox="0 0 16 18"><path d="M3.5 0.5L10.5 11M12.5 0.5L5.5 11" stroke="#555" stroke-width="2"/><circle cx="4" cy="14" r="2.8" fill="#dce9f5" stroke="#5a7fa8" stroke-width="1.4"/><circle cx="12" cy="14" r="2.8" fill="#dce9f5" stroke="#5a7fa8" stroke-width="1.4"/></svg>
<svg style="left:59px;top:119px;" width="17" height="17" viewBox="0 0 17 17"><path d="M0.5 0.5h7l2.5 2.5v9.5h-9.5z" fill="#fff" stroke="#555"/><path d="M2 4h5M2 6.5h5M2 9h3" stroke="#555"/><path d="M6.5 5.5h7l3 3v8h-10z" fill="#fff" stroke="#555"/><path d="M8.5 9.5h6M8.5 12h6M8.5 14.5h6" stroke="#555"/></svg>
<svg style="left:83.5px;top:127px;" width="7" height="4" viewBox="0 0 7 4"><path d="M0 0H7L3.5 4Z" fill="#555"/></svg>
<svg style="left:58px;top:147px;" width="21" height="17" viewBox="0 0 21 17"><path d="M1 13L7 6L13 11L6 17Z" fill="#eac078"/><path d="M8 6L12 3L16 7L13 10Z" fill="#666"/><path d="M12 3L16 0L20 4L16 7Z" fill="#444"/></svg>
<div class="t" style="left:18px;top:177px;font-size:15px;color:#6a6a6a;">剪贴板</div>
<svg style="left:85px;top:182px;" width="10" height="10" viewBox="0 0 10 10"><path d="M0.5 8V0.5H8" fill="none" stroke="#888"/><path d="M3 3L9 9M9 5V9H5" fill="none" stroke="#555"/></svg>
<div class="a" style="left:100px;top:87px;width:1px;height:104px;background:#d9d9d9;"></div>
<div class="a" style="left:104px;top:96px;width:178px;height:28px;background:#fff;border:1px solid #c6c6c6"></div>
<div class="t" style="left:107px;top:103px;font-size:15px;color:#262626;">等线</div>
<svg style="left:270.5px;top:108px;" width="7" height="4" viewBox="0 0 7 4"><path d="M0 0H7L3.5 4Z" fill="#555"/></svg>
<div class="a" style="left:282px;top:96px;width:47px;height:28px;background:#fff;border:1px solid #c6c6c6"></div>
<div class="t" style="left:286px;top:102px;font-size:16px;color:#444;">11</div>
<svg style="left:317.5px;top:108px;" width="7" height="4" viewBox="0 0 7 4"><path d="M0 0H7L3.5 4Z" fill="#555"/></svg>
<div class="t" style="left:337px;top:101px;font-size:16px;color:#555;">A</div>
<svg style="left:344px;top:97px;" width="7" height="4" viewBox="0 0 7 4"><path d="M0 4L3.5 0L7 4Z" fill="#3b8ed8"/></svg>
<div class="t" style="left:362px;top:101px;font-size:16px;color:#555;">A</div>
<svg style="left:370px;top:97px;" width="7" height="4" viewBox="0 0 7 4"><path d="M0 0L3.5 4L7 0Z" fill="#3b8ed8"/></svg>
<div class="t" style="left:111px;top:140px;font-size:16px;color:#444;font-weight:bold;transform:scaleX(0.88);transform-origin:0 0">B</div>
<svg style="left:138px;top:141px;" width="12" height="12" viewBox="0 0 12 12"><path d="M5.5 0H11.5L11.2 1.8H9.6L6.6 10.2H8.2L7.9 12H1.9L2.2 10.2H3.8L6.8 1.8H5.2Z" fill="#444"/></svg>
<div class="t" style="left:163px;top:139px;font-size:16px;color:#444;text-decoration:underline;font-weight:bold;transform:scaleX(0.9);transform-origin:0 0">U</div>
<svg style="left:184.5px;top:145px;" width="7" height="4" viewBox="0 0 7 4"><path d="M0 0H7L3.5 4Z" fill="#555"/></svg>
<div class="a" style="left:200px;top:135px;width:1px;height:25px;background:#d6d6d6;"></div>
<svg style="left:209px;top:138px;" width="17" height="18" viewBox="0 0 17 18"><g fill="#555"><rect x="0" y="0" width="1" height="1"/><rect x="0" y="2" width="1" height="1"/><rect x="0" y="4" width="1" height="1"/><rect x="0" y="6" width="1" height="1"/><rect x="0" y="8" width="1" height="1"/><rect x="0" y="10" width="1" height="1"/><rect x="0" y="12" width="1" height="1"/><rect x="0" y="14" width="1" height="1"/><rect x="2" y="0" width="1" height="1"/><rect x="2" y="8" width="1" height="1"/><rect x="4" y="0" width="1" height="1"/><rect x="4" y="8" width="1" height="1"/><rect x="6" y="0" width="1" height="1"/><rect x="6" y="8" width="1" height="1"/><rect x="8" y="0" width="1" height="1"/><rect x="8" y="2" width="1" height="1"/><rect x="8" y="4" width="1" height="1"/><rect x="8" y="6" width="1" height="1"/><rect x="8" y="8" width="1" height="1"/><rect x="8" y="10" width="1" height="1"/><rect x="8" y="12" width="1" height="1"/><rect x="8" y="14" width="1" height="1"/><rect x="10" y="0" width="1" height="1"/><rect x="10" y="8" width="1" height="1"/><rect x="12" y="0" width="1" height="1"/><rect x="12" y="8" width="1" height="1"/><rect x="14" y="0" width="1" height="1"/><rect x="14" y="8" width="1" height="1"/><rect x="16" y="0" width="1" height="1"/><rect x="16" y="2" width="1" height="1"/><rect x="16" y="4" width="1" height="1"/><rect x="16" y="6" width="1" height="1"/><rect x="16" y="8" width="1" height="1"/><rect x="16" y="10" width="1" height="1"/><rect x="16" y="12" width="1" height="1"/><rect x="16" y="14" width="1" height="1"/><rect x="0" y="16" width="17" height="1.3"/></g></svg>
<svg style="left:233.5px;top:145px;" width="7" height="4" viewBox="0 0 7 4"><path d="M0 0H7L3.5 4Z" fill="#555"/></svg>
<div class="a" style="left:249px;top:135px;width:1px;height:25px;background:#d6d6d6;"></div>
<svg style="left:260px;top:136px;" width="17" height="17" viewBox="0 0 17 17"><path d="M6 1L13 8L7 14L1 8Z" fill="#fff" stroke="#555" stroke-width="1.3"/><path d="M6 1V6" stroke="#555" stroke-width="1.3"/><path d="M13 8C15 10 16 12 15 14" fill="none" stroke="#3b8ed8" stroke-width="1.6"/></svg>
<svg style="left:282.5px;top:145px;" width="7" height="4" viewBox="0 0 7 4"><path d="M0 0H7L3.5 4Z" fill="#555"/></svg>
<div class="t" style="left:299px;top:137px;font-size:16.5px;color:#333;font-weight:bold">A</div>
<div class="a" style="left:296px;top:152px;width:20px;height:5px;background:#e00000;"></div>
<svg style="left:321.5px;top:145px;" width="7" height="4" viewBox="0 0 7 4"><path d="M0 0H7L3.5 4Z" fill="#555"/></svg>
<div class="a" style="left:337px;top:135px;width:1px;height:25px;background:#d6d6d6;"></div>
<div class="t" style="left:347px;top:138px;font-size:8px;color:#444;font-weight:bold">wén</div>
<div class="t" style="left:348px;top:146px;font-size:11px;color:#4a78a8;">文</div>
<svg style="left:370.5px;top:145px;" width="7" height="4" viewBox="0 0 7 4"><path d="M0 0H7L3.5 4Z" fill="#555"/></svg>
<div class="t" style="left:218px;top:177px;font-size:15px;color:#6a6a6a;">字体</div>
<svg style="left:371px;top:182px;" width="10" height="10" viewBox="0 0 10 10"><path d="M0.5 8V0.5H8" fill="none" stroke="#888"/><path d="M3 3L9 9M9 5V9H5" fill="none" stroke="#555"/></svg>
<div class="a" style="left:386px;top:87px;width:1px;height:104px;background:#d9d9d9;"></div>
<svg style="left:394px;top:101px;" width="18" height="20" viewBox="0 0 18 20"><path d="M0 0.5H18M2 3.5H16M0 6.5H18" stroke="#666" stroke-width="1"/></svg>
<svg style="left:420px;top:105px;" width="18" height="20" viewBox="0 0 18 20"><path d="M0 0.5H17M2 3.5H15M0 6.5H17M2 9.5H15" stroke="#666" stroke-width="1"/></svg>
<div class="a" style="left:442px;top:97px;width:26px;height:27px;background:#c5c5c5;"></div>
<svg style="left:446px;top:109px;" width="18" height="20" viewBox="0 0 18 20"><path d="M0 0.5H18M2 3.5H16M0 6.5H18M2 9.5H16" stroke="#555" stroke-width="1"/></svg>
<svg style="left:474px;top:100px;" width="20" height="18" viewBox="0 0 20 18"><text x="0" y="12" font-size="13" font-family="Liberation Sans" font-weight="bold" fill="#555" transform="rotate(-40 8 10)">ab</text><path d="M6 16L18 5M14 5H18V9" fill="none" stroke="#555" stroke-width="1.3"/></svg>
<svg style="left:497.5px;top:108px;" width="7" height="4" viewBox="0 0 7 4"><path d="M0 0H7L3.5 4Z" fill="#555"/></svg>
<svg style="left:396px;top:142px;" width="18" height="20" viewBox="0 0 18 20"><path d="M0 0.5H14M0 3.5H9M0 6.5H14M0 9.5H9" stroke="#666" stroke-width="1"/></svg>
<svg style="left:421px;top:142px;" width="18" height="20" viewBox="0 0 18 20"><path d="M0 0.5H15M3 3.5H12M0 6.5H15M3 9.5H12" stroke="#666" stroke-width="1"/></svg>
<svg style="left:448px;top:142px;" width="18" height="20" viewBox="0 0 18 20"><path d="M0 0.5H14M5 3.5H14M0 6.5H14M5 9.5H14" stroke="#666" stroke-width="1"/></svg>
<svg style="left:474px;top:138px;" width="20" height="18" viewBox="0 0 20 18"><path d="M1 1.5H19M10 5.5H19M10 9.5H19M10 13.5H19M1 16.5H19" stroke="#666"/><path d="M1 9.5L5 5.5V8H8V11H5V13.5Z" fill="#3a72b0"/></svg>
<svg style="left:500px;top:138px;" width="20" height="18" viewBox="0 0 20 18"><path d="M1 1.5H19M10 5.5H19M10 9.5H19M10 13.5H19M1 16.5H19" stroke="#666"/><path d="M9 9.5L5 5.5V8H1V11H5V13.5Z" fill="#3a72b0"/></svg>
<div class="a" style="left:528px;top:92px;width:1px;height:72px;background:#d9d9d9;"></div>
<svg style="left:536px;top:100px;" width="22" height="20" viewBox="0 0 22 20"><path d="M0.5 0.5H12.5M0.5 4.5H8M0.5 8.5H8M0.5 12.5H8M0.5 16.5H12.5M0.5 0.5V16.5" fill="none" stroke="#555"/><path d="M9 5H16C19 5 19 11 16 11H12M14 9L12 11L14 13" fill="none" stroke="#3b8ed8" stroke-width="1.5"/></svg>
<svg style="left:536px;top:137px;" width="20" height="20" viewBox="0 0 20 20"><path d="M0.5 0.5H19.5V19.5H0.5ZM0.5 5.5H19.5M0.5 14.5H19.5M7.5 0.5V5.5M12.5 14.5V19.5" fill="none" stroke="#555"/><path d="M3 10H17M5.5 7.5L3 10L5.5 12.5M14.5 7.5L17 10L14.5 12.5" fill="none" stroke="#3b8ed8" stroke-width="1.3"/></svg>
<svg style="left:561.5px;top:145px;" width="7" height="4" viewBox="0 0 7 4"><path d="M0 0H7L3.5 4Z" fill="#555"/></svg>
<div class="t" style="left:441px;top:177px;font-size:15px;color:#6a6a6a;">对齐方式</div>
<svg style="left:563px;top:182px;" width="10" height="10" viewBox="0 0 10 10"><path d="M0.5 8V0.5H8" fill="none" stroke="#888"/><path d="M3 3L9 9M9 5V9H5" fill="none" stroke="#555"/></svg>
<div class="a" style="left:576px;top:87px;width:1px;height:104px;background:#d9d9d9;"></div>
<div class="a" style="left:582px;top:88px;width:60px;height:27px;background:#fff;border:1px solid #c6c6c6"></div>
<div class="t" style="left:586px;top:95px;font-size:15px;color:#262626;">常规</div>
<svg style="left:585px;top:119px;" width="20" height="20" viewBox="0 0 20 20"><path d="M0.5 0.5H17.5V9.5H0.5Z" fill="#fff" stroke="#3b6ea5" stroke-width="2"/><circle cx="9" cy="5" r="2.5" fill="#3b6ea5"/><ellipse cx="13" cy="12" rx="5" ry="2" fill="#e8bd72"/><ellipse cx="13" cy="15" rx="5" ry="2" fill="#e8bd72"/><ellipse cx="13" cy="18" rx="5" ry="2" fill="#e8bd72"/></svg>
<svg style="left:609.5px;top:127px;" width="7" height="4" viewBox="0 0 7 4"><path d="M0 0H7L3.5 4Z" fill="#555"/></svg>
<div class="t" style="left:593px;top:149px;font-size:10px;color:#444;font-weight:bold">.0</div>
<div class="t" style="left:590px;top:158px;font-size:10px;color:#444;font-weight:bold">.00</div>
<svg style="left:586px;top:150px;" width="7" height="7" viewBox="0 0 7 7"><path d="M7 3.5H1M3.5 1L1 3.5L3.5 6" fill="none" stroke="#3b8ed8" stroke-width="1.4"/></svg>
<div class="t" style="left:610px;top:149px;font-size:10px;color:#444;font-weight:bold">.0</div>
<svg style="left:608px;top:159px;" width="7" height="7" viewBox="0 0 7 7"><path d="M0 3.5H6M3.5 1L6 3.5L3.5 6" fill="none" stroke="#3b8ed8" stroke-width="1.4"/></svg>
<div class="t" style="left:601px;top:177px;font-size:15px;color:#6a6a6a;">数字</div>
<div class="a" style="left:0px;top:197px;width:620px;height:56px;background:#e6e6e6;"></div>
<div class="a" style="left:8px;top:210px;width:126px;height:31px;background:#fff;border:1px solid #c6c6c6"></div>
<div class="t" style="left:14px;top:219px;font-size:15px;color:#333;">A1</div>
<svg style="left:118.0px;top:223px;" width="8" height="4" viewBox="0 0 8 4"><path d="M0 0H8L4.0 4Z" fill="#666"/></svg>
<div class="a" style="left:151px;top:218px;width:3px;height:3px;background:#b0b0b0;"></div>
<div class="a" style="left:151px;top:223px;width:3px;height:3px;background:#b0b0b0;"></div>
<div class="a" style="left:151px;top:228px;width:3px;height:3px;background:#b0b0b0;"></div>
<div class="a" style="left:171px;top:210px;width:138px;height:31px;background:#fff;border:1px solid #c6c6c6"></div>
<svg style="left:187px;top:218px;" width="14" height="14" viewBox="0 0 14 14"><path d="M0 0L14 14M14 0L0 14" stroke="#b4b4b4" stroke-width="1.3"/></svg>
<svg style="left:230px;top:217px;" width="18" height="14" viewBox="0 0 18 14"><path d="M1 7L6.5 12.5L17 1" fill="none" stroke="#b4b4b4" stroke-width="2"/></svg>
<div class="t" style="left:277px;top:216px;font-size:17px;color:#666;font-family:'Liberation Serif',serif;font-style:italic;font-weight:bold">f<span style="font-size:13px">x</span></div>
<div class="a" style="left:312px;top:210px;width:320px;height:31px;background:#fff;border:1px solid #c6c6c6"></div>
<div class="t" style="left:325px;top:217px;font-size:17px;color:#444;">表头1</div>
<div class="a" style="left:0px;top:253px;width:620px;height:23px;background:#e6e6e6;"></div>
<div class="a" style="left:1px;top:276px;width:33px;height:145px;background:#e6e6e6;"></div>
<div class="a" style="left:0px;top:0px;width:1px;height:421px;background:#1d6b40;"></div>
<div class="a" style="left:1px;top:275px;width:619px;height:1px;background:#bdbdbd;"></div>
<div class="a" style="left:34px;top:253px;width:1px;height:168px;background:#bdbdbd;"></div>
<svg style="left:16px;top:258px;" width="15" height="14" viewBox="0 0 15 14"><path d="M15 0V14H0Z" fill="#b7b7b7"/></svg>
<div class="a" style="left:35px;top:253px;width:79px;height:22px;background:#d2d2d2;"></div>
<div class="a" style="left:1px;top:276px;width:33px;height:22px;background:#d2d2d2;"></div>
<div class="a" style="left:114px;top:255px;width:1px;height:20px;background:#c6c6c6;"></div>
<div class="a" style="left:194px;top:255px;width:1px;height:20px;background:#c6c6c6;"></div>
<div class="a" style="left:274px;top:255px;width:1px;height:20px;background:#c6c6c6;"></div>
<div class="a" style="left:354px;top:255px;width:1px;height:20px;background:#c6c6c6;"></div>
<div class="a" style="left:434px;top:255px;width:1px;height:20px;background:#c6c6c6;"></div>
<div class="a" style="left:514px;top:255px;width:1px;height:20px;background:#c6c6c6;"></div>
<div class="a" style="left:594px;top:255px;width:1px;height:20px;background:#c6c6c6;"></div>
<div class="t" style="left:-25px;width:200px;text-align:center;top:257px;font-size:18px;color:#2d5c45;">A</div>
<div class="t" style="left:55px;width:200px;text-align:center;top:257px;font-size:18px;color:#333;">B</div>
<div class="t" style="left:135px;width:200px;text-align:center;top:257px;font-size:18px;color:#333;">C</div>
<div class="t" style="left:215px;width:200px;text-align:center;top:257px;font-size:18px;color:#333;">D</div>
<div class="t" style="left:295px;width:200px;text-align:center;top:257px;font-size:18px;color:#333;">E</div>
<div class="t" style="left:375px;width:200px;text-align:center;top:257px;font-size:18px;color:#333;">F</div>
<div class="t" style="left:455px;width:200px;text-align:center;top:257px;font-size:18px;color:#333;">G</div>
<div class="a" style="left:35px;top:276px;width:239px;height:22px;background:#ffff00;"></div>
<div class="a" style="left:35px;top:299px;width:239px;height:91px;background:#e2efda;"></div>
<div class="a" style="left:1px;top:298px;width:33px;height:1px;background:#c6c6c6;"></div>
<div class="a" style="left:274px;top:298px;width:346px;height:1px;background:#d4d4d4;"></div>
<div class="a" style="left:1px;top:321px;width:33px;height:1px;background:#c6c6c6;"></div>
<div class="a" style="left:274px;top:321px;width:346px;height:1px;background:#d4d4d4;"></div>
<div class="a" style="left:1px;top:344px;width:33px;height:1px;background:#c6c6c6;"></div>
<div class="a" style="left:274px;top:344px;width:346px;height:1px;background:#d4d4d4;"></div>
<div class="a" style="left:1px;top:367px;width:33px;height:1px;background:#c6c6c6;"></div>
<div class="a" style="left:274px;top:367px;width:346px;height:1px;background:#d4d4d4;"></div>
<div class="a" style="left:1px;top:390px;width:33px;height:1px;background:#c6c6c6;"></div>
<div class="a" style="left:35px;top:390px;width:585px;height:1px;background:#d4d4d4;"></div>
<div class="a" style="left:1px;top:413px;width:33px;height:1px;background:#c6c6c6;"></div>
<div class="a" style="left:35px;top:413px;width:585px;height:1px;background:#d4d4d4;"></div>
<div class="a" style="left:1px;top:436px;width:33px;height:1px;background:#c6c6c6;"></div>
<div class="a" style="left:35px;top:436px;width:585px;height:1px;background:#d4d4d4;"></div>
<div class="a" style="left:274px;top:276px;width:1px;height:145px;background:#d4d4d4;"></div>
<div class="a" style="left:354px;top:276px;width:1px;height:145px;background:#d4d4d4;"></div>
<div class="a" style="left:434px;top:276px;width:1px;height:145px;background:#d4d4d4;"></div>
<div class="a" style="left:514px;top:276px;width:1px;height:145px;background:#d4d4d4;"></div>
<div class="a" style="left:594px;top:276px;width:1px;height:145px;background:#d4d4d4;"></div>
<div class="a" style="left:114px;top:390px;width:1px;height:31px;background:#d4d4d4;"></div>
<div class="a" style="left:194px;top:390px;width:1px;height:31px;background:#d4d4d4;"></div>
<div class="t" style="left:-83px;width:200px;text-align:center;top:281px;font-size:17px;color:#2d6a55;">1</div>
<div class="t" style="left:-83px;width:200px;text-align:center;top:304px;font-size:17px;color:#333;">2</div>
<div class="t" style="left:-83px;width:200px;text-align:center;top:327px;font-size:17px;color:#333;">3</div>
<div class="t" style="left:-83px;width:200px;text-align:center;top:350px;font-size:17px;color:#333;">4</div>
<div class="t" style="left:-83px;width:200px;text-align:center;top:373px;font-size:17px;color:#333;">5</div>
<div class="t" style="left:-83px;width:200px;text-align:center;top:396px;font-size:17px;color:#333;">6</div>
<div class="t" style="left:-83px;width:200px;text-align:center;top:419px;font-size:17px;color:#333;">7</div>
<div class="t" style="left:39px;top:280px;font-size:17.5px;color:#222;">表头1</div>
<div class="t" style="left:119px;top:280px;font-size:17.5px;color:#222;">表头2</div>
<div class="t" style="left:199px;top:280px;font-size:17.5px;color:#222;">表头3</div>
<div class="t" style="right:calc(100% - 111px);top:304px;font-size:17.5px;color:#222;">4</div>
<div class="t" style="left:119px;top:303px;font-size:17.5px;color:#222;">沙悟净</div>
<div class="t" style="right:calc(100% - 271px);top:304px;font-size:17.5px;color:#222;">1</div>
<div class="t" style="right:calc(100% - 111px);top:327px;font-size:17.5px;color:#222;">7</div>
<div class="t" style="left:119px;top:326px;font-size:17.5px;color:#222;">沙悟净</div>
<div class="t" style="right:calc(100% - 271px);top:327px;font-size:17.5px;color:#222;">2</div>
<div class="t" style="right:calc(100% - 111px);top:350px;font-size:17.5px;color:#222;">8</div>
<div class="t" style="left:119px;top:349px;font-size:17.5px;color:#222;">沙悟净</div>
<div class="t" style="right:calc(100% - 271px);top:350px;font-size:17.5px;color:#222;">3</div>
<div class="t" style="right:calc(100% - 111px);top:373px;font-size:17.5px;color:#222;">10</div>
<div class="t" style="left:119px;top:372px;font-size:17.5px;color:#222;">沙悟净</div>
<div class="t" style="right:calc(100% - 271px);top:373px;font-size:17.5px;color:#222;">4</div>
<div class="a" style="left:33px;top:275px;width:82px;height:25px;background:transparent;border:2px solid #276b47"></div>
<div class="a" style="left:111px;top:296px;width:6px;height:6px;background:#276b47;"></div>
</div>
</body></html>
